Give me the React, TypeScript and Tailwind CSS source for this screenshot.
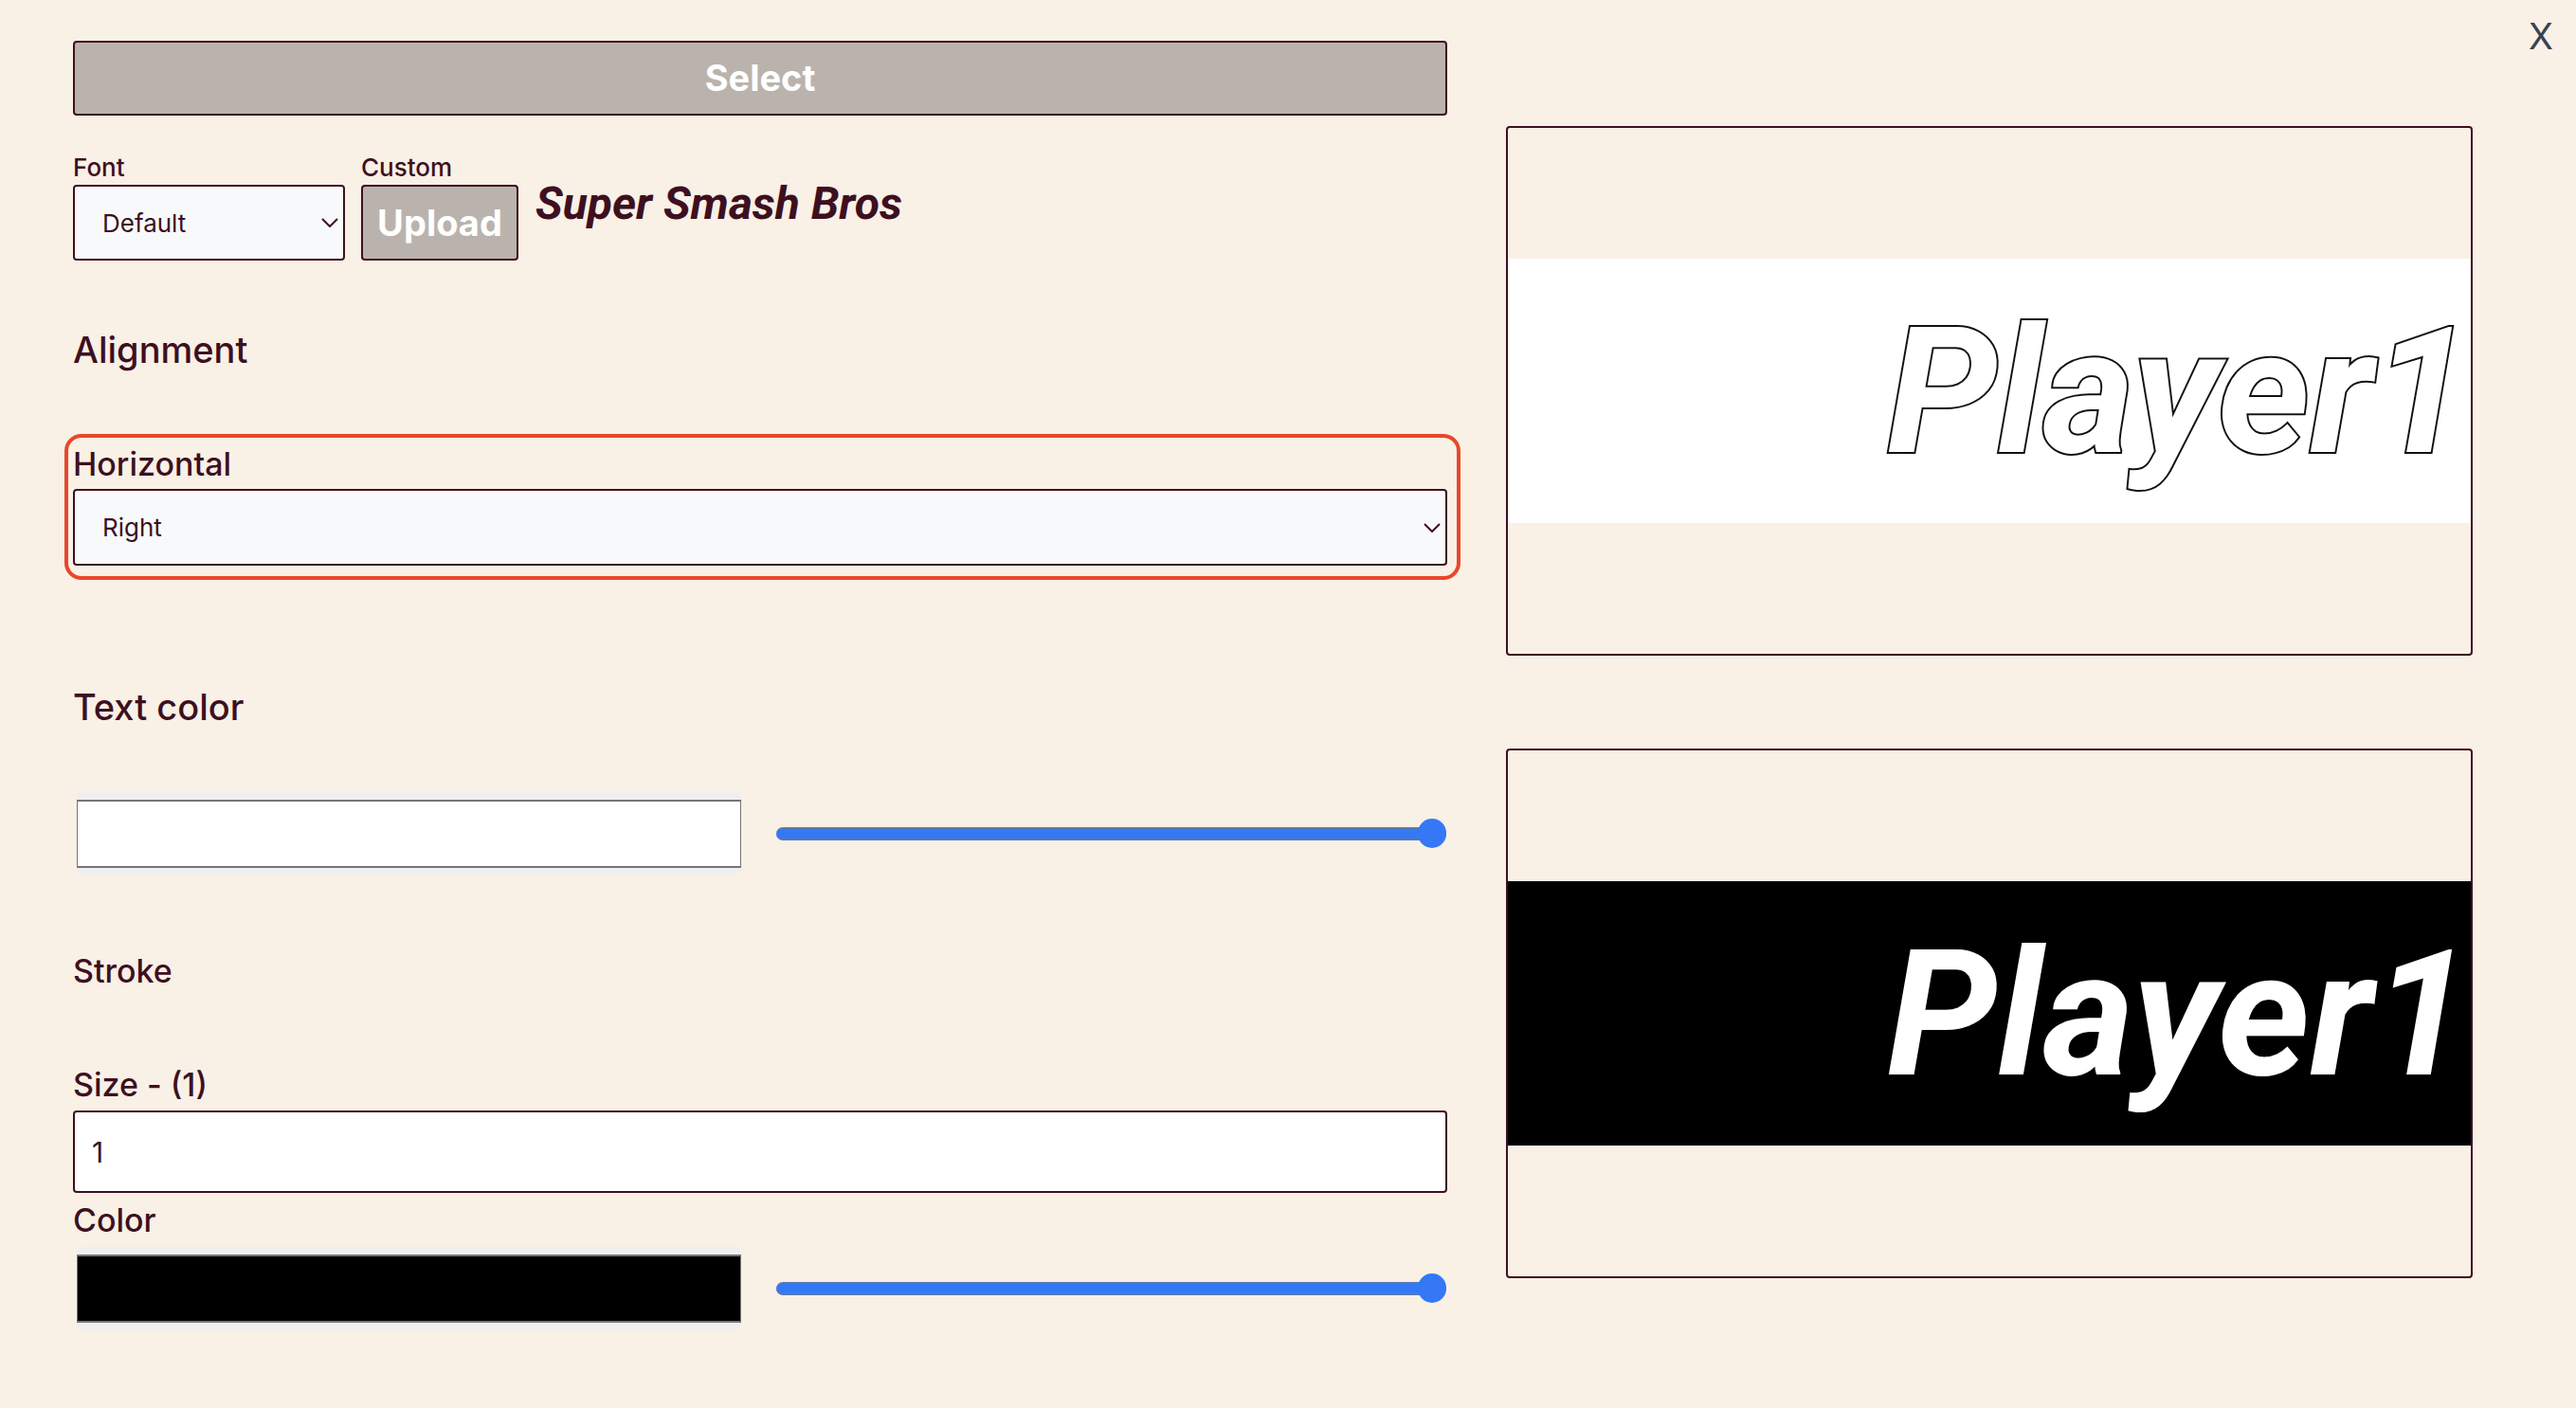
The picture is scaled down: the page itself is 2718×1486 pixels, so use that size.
import React from "react";

function Chevron({ className }: { className?: string }) {
  return (
    <svg
      className={className}
      width="18"
      height="10"
      viewBox="0 0 18 10"
      fill="none"
      stroke="#3d1020"
      strokeWidth="2"
    >
      <polyline points="1,1 9,9 17,1" />
    </svg>
  );
}

function SelectBox({
  value,
  options,
  className,
}: {
  value: string;
  options: string[];
  className?: string;
}) {
  return (
    <div className={"relative " + (className ?? "")}>
      <select
        defaultValue={value}
        className="h-full w-full appearance-none rounded-[4px] border-2 border-[#3d1020] bg-[#f7f9fb] pl-[29px] text-[26px] text-[#3d1020] outline-none"
      >
        {options.map((o) => (
          <option key={o}>{o}</option>
        ))}
      </select>
      <Chevron className="pointer-events-none absolute right-[7px] top-1/2 -translate-y-1/2" />
    </div>
  );
}

function ColorRow({ swatch }: { swatch: string }) {
  return (
    <div className="flex h-[87px] items-center">
      {/* native-looking colour well */}
      <div className="ml-[4px] flex h-[87px] w-[701px] flex-col justify-center rounded-[6px] bg-[#efefef]">
        <div className={"h-[72px] border-x border-y-2 border-[#767676] " + swatch} />
      </div>
      {/* range slider, value at max */}
      <div className="relative ml-[37px] flex h-[31px] w-[707px] items-center">
        <div className="h-[14px] w-full rounded-full border-y-2 border-[#5a78b0] bg-[#3478f6]" />
        <div className="absolute right-0 top-0 h-[31px] w-[30px] rounded-full bg-[#3478f6]" />
      </div>
    </div>
  );
}

function Preview({ outline }: { outline?: boolean }) {
  return (
    <div className="flex h-[559px] w-[1020px] flex-col justify-center rounded-[4px] border-2 border-[#3d1020]">
      <div
        className={
          "flex h-[279px] items-center justify-end " +
          (outline ? "bg-white" : "bg-black")
        }
      >
        <span
          className={
            "font-['Roboto',sans-serif] text-[186px] font-bold italic leading-none text-white " +
            (outline ? "[-webkit-text-stroke:4px_#111] [paint-order:stroke_fill]" : "")
          }
        >
          Player1
        </span>
      </div>
    </div>
  );
}

export default function App() {
  return (
    <div className="relative min-h-screen bg-[#f9f0e6] font-['Inter',sans-serif] text-[#3d1020]">
      <button className="absolute right-[24px] top-[15px] text-[38px] leading-[46px] text-[#374151]">
        X
      </button>

      <div className="flex gap-[62px] pl-[77px] pt-[43px]">
        {/* Left: settings */}
        <div className="flex w-[1450px] flex-col">
          <button className="h-[79px] w-full rounded-[4px] border-2 border-[#3d1020] bg-[#bab3ad] text-[38px] font-bold text-white">
            Select
          </button>

          <div className="mt-[39px] flex gap-[17px]">
            <div className="flex flex-col">
              <label className="text-[26px] font-medium leading-[31px]">Font</label>
              <SelectBox
                value="Default"
                options={["Default", "Custom"]}
                className="mt-[3px] h-[80px] w-[287px]"
              />
            </div>
            <div className="flex flex-col">
              <label className="text-[26px] font-medium leading-[31px]">Custom</label>
              <button className="mt-[3px] h-[80px] w-[166px] rounded-[4px] border-2 border-[#3d1020] bg-[#bab3ad] text-[38px] font-bold text-white">
                Upload
              </button>
            </div>
            <div className="ml-[1px] mt-[30px] font-['Roboto',sans-serif] text-[48px] font-bold italic leading-none">
              Super Smash Bros
            </div>
          </div>

          <h2 className="mt-[71px] text-[38px] font-medium leading-[46px]">Alignment</h2>

          <div className="relative mt-[77px]">
            <div className="pointer-events-none absolute -bottom-[15px] -left-[9px] -right-[14px] -top-[11px] rounded-[18px] border-4 border-[#e8472b]" />
            <label className="block text-[34px] font-medium leading-[41px]">Horizontal</label>
            <SelectBox
              value="Right"
              options={["Left", "Center", "Right"]}
              className="mt-[6px] h-[81px] w-full"
            />
          </div>

          <h2 className="mt-[126px] text-[38px] font-medium leading-[46px]">Text color</h2>
          <div className="mt-[67px]">
            <ColorRow swatch="bg-white" />
          </div>

          <h3 className="mt-[81px] text-[34px] font-medium leading-[41px]">Stroke</h3>

          <label className="mt-[79px] text-[34px] font-medium leading-[41px]">Size - (1)</label>
          <input
            defaultValue="1"
            className="mt-[7px] h-[87px] w-full rounded-[4px] border-2 border-[#3d1020] bg-white pl-[18px] text-[30px] text-[#3d1020] outline-none"
          />

          <label className="mt-[8px] text-[34px] font-medium leading-[41px]">Color</label>
          <div className="mt-[8px]">
            <ColorRow swatch="bg-black" />
          </div>
        </div>

        {/* Right: previews */}
        <div className="flex flex-col gap-[98px] pt-[90px]">
          <Preview outline />
          <Preview />
        </div>
      </div>
    </div>
  );
}
